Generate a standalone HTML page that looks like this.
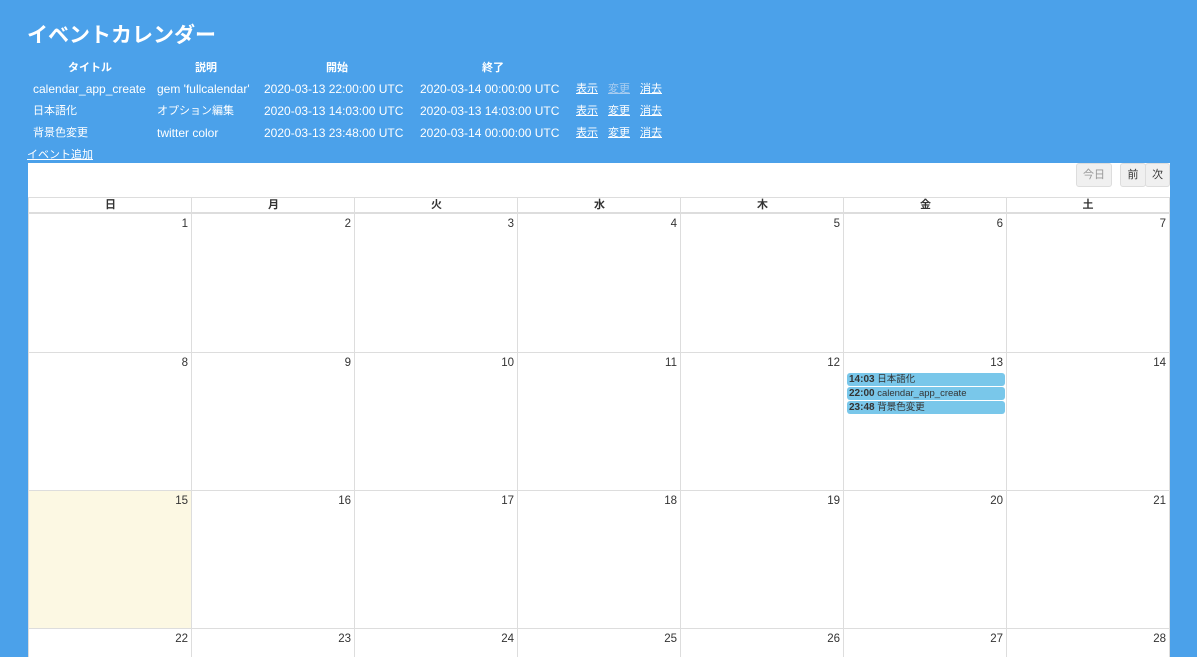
<!DOCTYPE html>
<html><head><meta charset="utf-8"><style>
*{margin:0;padding:0;box-sizing:border-box}
html,body{width:1197px;height:657px;overflow:hidden}
body{background:#4ba1ea;font-family:"Liberation Sans","Noto Sans CJK JP",sans-serif;color:#fff;position:relative}
h1{position:absolute;left:27px;top:22px;font-size:21px;line-height:28px;font-weight:bold}
.t{position:absolute;font-size:12px;line-height:14px;white-space:nowrap}
.h{font-weight:bold;font-size:11px}
.u{text-decoration:underline}
.dim{color:#a9cdf0}
#cal{position:absolute;left:28px;top:163px;width:1142px;height:494px;background:#fff;overflow:hidden}
.btn{position:absolute;top:0;height:24px;background:#f0f0f0;border:1px solid #ddd;color:#333;font-size:11px;line-height:22px;text-align:center;border-radius:3px}
.grid{position:absolute;left:0;top:34px;width:1142px}
.hd{position:absolute;top:0;height:16px;border:1px solid #ddd;border-right:none;color:#333;font-size:11px;font-weight:bold;text-align:center;line-height:15px}
.c{position:absolute;border-left:1px solid #ddd;border-top:1px solid #ddd;color:#333;font-size:11.5px;line-height:14px;text-align:right;padding:3px 3px 0 0}
.ev{position:absolute;left:819px;width:158px;height:13px;background:#79c7ea;border-radius:3px;color:#333;font-size:9.5px;line-height:13px;padding-left:2px;white-space:nowrap}
.ev b{font-size:10px}
</style></head><body>
<h1>イベントカレンダー</h1>
<div class="t h" style="left:68px;top:61px">タイトル</div>
<div class="t h" style="left:195px;top:61px">説明</div>
<div class="t h" style="left:326px;top:61px">開始</div>
<div class="t h" style="left:482px;top:61px">終了</div>
<div class="t" style="left:33px;top:82px">calendar_app_create</div>
<div class="t" style="left:157px;top:82px">gem 'fullcalendar'</div>
<div class="t" style="left:264px;top:82px">2020-03-13 22:00:00 UTC</div>
<div class="t" style="left:420px;top:82px">2020-03-14 00:00:00 UTC</div>
<div class="t u" style="left:576px;top:82px;font-size:11px">表示</div><div class="t u dim" style="left:608px;top:82px;font-size:11px">変更</div><div class="t u" style="left:640px;top:82px;font-size:11px">消去</div>
<div class="t" style="left:33px;top:104px;font-size:11px">日本語化</div>
<div class="t" style="left:157px;top:104px;font-size:11px">オプション編集</div>
<div class="t" style="left:264px;top:104px">2020-03-13 14:03:00 UTC</div>
<div class="t" style="left:420px;top:104px">2020-03-13 14:03:00 UTC</div>
<div class="t u" style="left:576px;top:104px;font-size:11px">表示</div><div class="t u" style="left:608px;top:104px;font-size:11px">変更</div><div class="t u" style="left:640px;top:104px;font-size:11px">消去</div>
<div class="t" style="left:33px;top:126px;font-size:11px">背景色変更</div>
<div class="t" style="left:157px;top:126px">twitter color</div>
<div class="t" style="left:264px;top:126px">2020-03-13 23:48:00 UTC</div>
<div class="t" style="left:420px;top:126px">2020-03-14 00:00:00 UTC</div>
<div class="t u" style="left:576px;top:126px;font-size:11px">表示</div><div class="t u" style="left:608px;top:126px;font-size:11px">変更</div><div class="t u" style="left:640px;top:126px;font-size:11px">消去</div>
<div class="t u" style="left:27px;top:148px;font-size:11px">イベント追加</div>
<div id="cal">
<div class="btn" style="left:1048px;width:36px;color:#999">今日</div>
<div class="btn" style="left:1092px;width:26px">前</div>
<div class="btn" style="left:1117px;width:25px">次</div>
<div class="grid">
<div class="hd" style="left:0;width:164px">日</div>
<div class="hd" style="left:163px;width:164px">月</div>
<div class="hd" style="left:326px;width:164px">火</div>
<div class="hd" style="left:489px;width:164px">水</div>
<div class="hd" style="left:652px;width:164px">木</div>
<div class="hd" style="left:815px;width:164px">金</div>
<div class="hd" style="left:978px;width:164px;border-right:1px solid #ddd">土</div>
</div>
<div id="cells"></div>
<div class="ev" style="top:210px"><b>14:03</b> 日本語化</div>
<div class="ev" style="top:224px"><b>22:00</b> calendar_app_create</div>
<div class="ev" style="top:238px"><b>23:48</b> 背景色変更</div>
</div>
<script>
var h='',xs=[0,163,326,489,652,815,978,1142],ys=[50,189,327,465,494];
for(var r=0;r<4;r++)for(var d=0;d<7;d++){var n=r*7+d+1;
h+='<div class="c" style="left:'+xs[d]+'px;top:'+ys[r]+'px;width:'+(xs[d+1]-xs[d])+'px;height:'+(ys[r+1]-ys[r])+'px;'+(n==15?'background:#fcf8e3;':'')+(d==6?'border-right:1px solid #ddd;':'')+'">'+n+'</div>';}
document.getElementById('cells').innerHTML=h;
</script>
</body></html>
